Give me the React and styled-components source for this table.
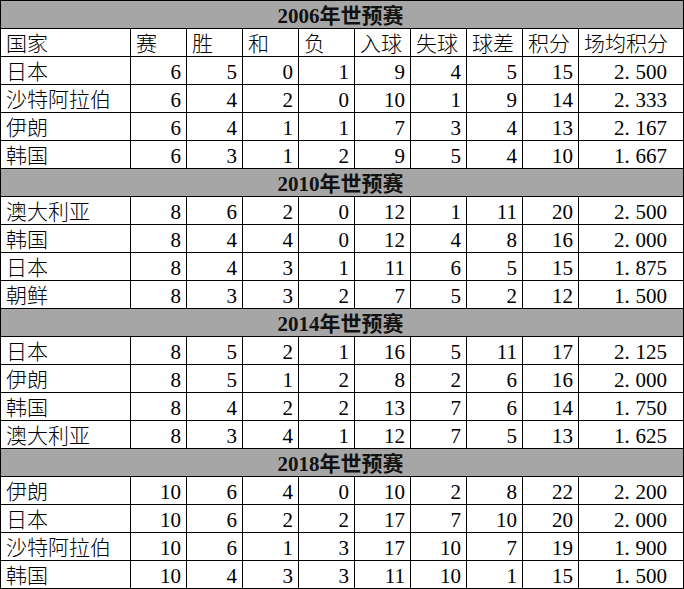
import React from "react";
import styled, { createGlobalStyle } from "styled-components";

const Global = createGlobalStyle`
  html, body { margin: 0; padding: 0; background: #ffffff; }
  body { font-family: "Liberation Serif", "Noto Sans CJK SC", serif; color: #000; }
`;

const Sheet = styled.div`
  display: grid;
  grid-template-columns: 130px repeat(8, 56px) 105px;
  grid-auto-rows: 28px;
  width: 684px;
  box-sizing: border-box;
  border-left: 1px solid #000;
  border-top: 1px solid #000;
  font-size: 21px;
`;

const Cell = styled.div`
  box-sizing: border-box;
  border-right: 1px solid #000;
  border-bottom: 1px solid #000;
  padding: 4px 5px 0 5px;
  line-height: 23px;
  white-space: nowrap;
  overflow: hidden;
`;

const TitleCell = styled(Cell)`
  grid-column: 1 / -1;
  background: #a6a6a6;
  text-align: center;
  font-weight: 700;
  color: #111;
  padding-left: 2px;
`;

const HeadCell = styled(Cell)`
  font-weight: 300;
  text-align: left;
`;

const NameCell = styled(Cell)`
  font-weight: 300;
`;

const NumCell = styled(Cell)`
  text-align: right;
  padding-right: ${(p) => (p.$wide ? "16px" : "5px")};
`;

const Dot = styled.span`
  letter-spacing: 0.27em;
`;

const headers = ["国家", "赛", "胜", "和", "负", "入球", "失球", "球差", "积分", "场均积分"];

const groups = [
  {
    title: "2006年世预赛",
    rows: [
      ["日本", 6, 5, 0, 1, 9, 4, 5, 15, "2.500"],
      ["沙特阿拉伯", 6, 4, 2, 0, 10, 1, 9, 14, "2.333"],
      ["伊朗", 6, 4, 1, 1, 7, 3, 4, 13, "2.167"],
      ["韩国", 6, 3, 1, 2, 9, 5, 4, 10, "1.667"],
    ],
  },
  {
    title: "2010年世预赛",
    rows: [
      ["澳大利亚", 8, 6, 2, 0, 12, 1, 11, 20, "2.500"],
      ["韩国", 8, 4, 4, 0, 12, 4, 8, 16, "2.000"],
      ["日本", 8, 4, 3, 1, 11, 6, 5, 15, "1.875"],
      ["朝鲜", 8, 3, 3, 2, 7, 5, 2, 12, "1.500"],
    ],
  },
  {
    title: "2014年世预赛",
    rows: [
      ["日本", 8, 5, 2, 1, 16, 5, 11, 17, "2.125"],
      ["伊朗", 8, 5, 1, 2, 8, 2, 6, 16, "2.000"],
      ["韩国", 8, 4, 2, 2, 13, 7, 6, 14, "1.750"],
      ["澳大利亚", 8, 3, 4, 1, 12, 7, 5, 13, "1.625"],
    ],
  },
  {
    title: "2018年世预赛",
    rows: [
      ["伊朗", 10, 6, 4, 0, 10, 2, 8, 22, "2.200"],
      ["日本", 10, 6, 2, 2, 17, 7, 10, 20, "2.000"],
      ["沙特阿拉伯", 10, 6, 1, 3, 17, 10, 7, 19, "1.900"],
      ["韩国", 10, 4, 3, 3, 11, 10, 1, 15, "1.500"],
    ],
  },
];

function Decimal({ value }) {
  const [a, b] = String(value).split(".");
  return (
    <>
      {a}
      <Dot>.</Dot>
      {b}
    </>
  );
}

export default function App() {
  return (
    <>
      <Global />
      <Sheet>
        {groups.map((g, gi) => (
          <React.Fragment key={g.title}>
            <TitleCell>{g.title}</TitleCell>
            {gi === 0 && headers.map((h) => <HeadCell key={h}>{h}</HeadCell>)}
            {g.rows.map((r, ri) => (
              <React.Fragment key={ri}>
                <NameCell>{r[0]}</NameCell>
                {r.slice(1, 9).map((v, i) => (
                  <NumCell key={i}>{v}</NumCell>
                ))}
                <NumCell $wide>
                  <Decimal value={r[9]} />
                </NumCell>
              </React.Fragment>
            ))}
          </React.Fragment>
        ))}
      </Sheet>
    </>
  );
}
